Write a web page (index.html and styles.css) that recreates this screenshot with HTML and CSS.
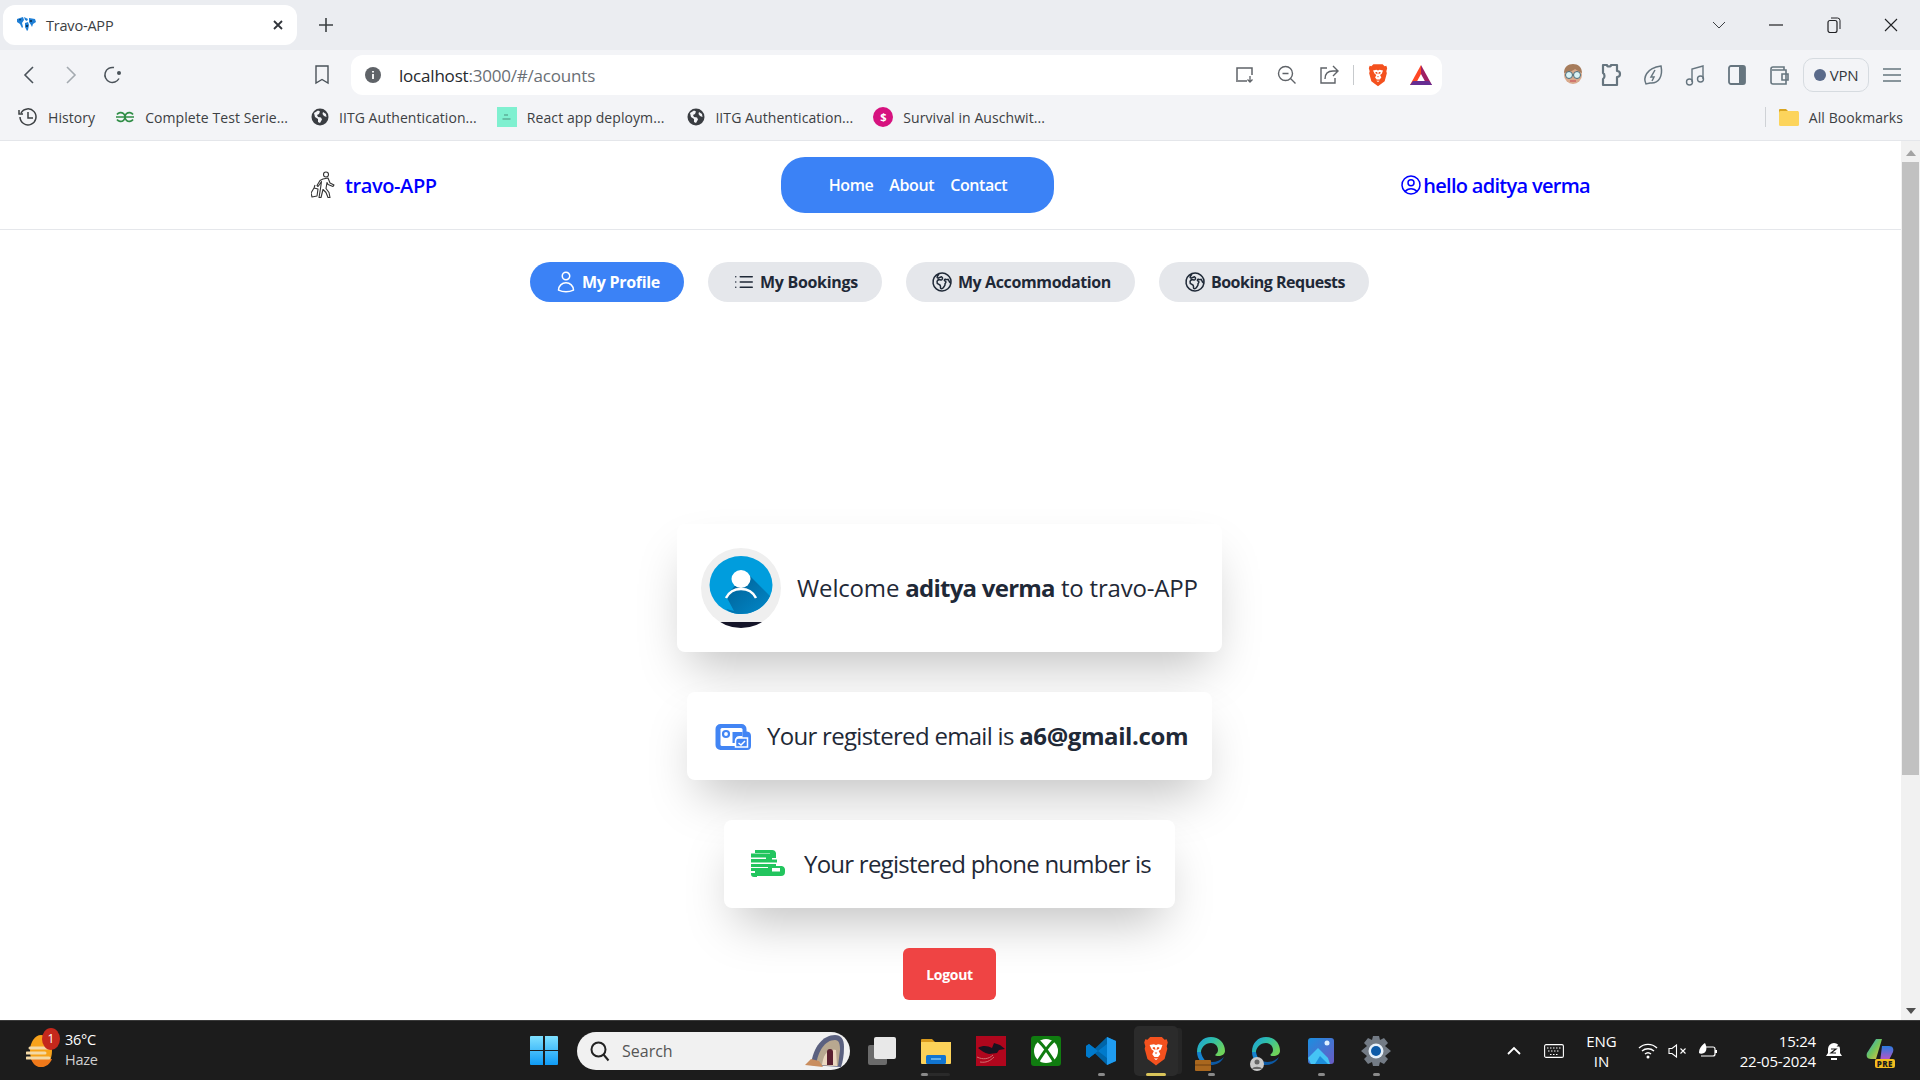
FILE: index.html
```html
<!doctype html>
<html lang="en">
<head>
<meta charset="utf-8">
<title>Travo-APP</title>
<link rel="stylesheet" href="styles.css">
</head>

<body>

<!-- shared logos -->
<svg class="defs" width="0" height="0">
  <defs>
    <linearGradient id="edge-g" x1="0" y1="0" x2="1" y2=".6"><stop offset="0" stop-color="#1b9de2"/><stop offset=".5" stop-color="#2fbfa8"/><stop offset="1" stop-color="#6fd35a"/></linearGradient>
  </defs>
  <symbol id="brave" viewBox="0 0 24 28">
    <path fill="#f4511e" d="M12 1h5.500L20 3.500l2-.5 1 3-1 3.500.6 2.500-2.600 9.500-6 4.500-2 1.500-2-1.500-6-4.500L1.400 12l.6-2.500L1 6l1-3 2 .5L6.500 1z"/>
    <path fill="#fff" d="M6 8.500l4-.8 2 .8 2-.8 4 .8-1.500 4-2 1.500 1.500 3-2 2.500H10.500l-2-2.500 1.500-3-2-1.500zM10 21h4l-2 1.500z"/>
    <path fill="#f4511e" d="M9 10.500h2l.5 2.500-2.500-1zM15 10.500h-2l-.5 2.500 2.500-1zM10.800 15.500h2.400l-1.200 1.500z"/>
  </symbol>
  <symbol id="globe" viewBox="0 0 24 24">
    <path fill="none" stroke="currentColor" stroke-width="1.500" stroke-linecap="round" stroke-linejoin="round" d="M20.893 13.393l-1.135-1.135a2.252 2.252 0 01-.421-.585l-1.08-2.16a.414.414 0 00-.663-.107.827.827 0 01-.812.21l-1.273-.363a.89.89 0 00-.738 1.595l.587.39c.59.395.674 1.23.172 1.732l-.2.2c-.212.212-.33.498-.33.796v.41c0 .409-.11.809-.32 1.158l-1.315 2.191a2.11 2.11 0 01-1.81 1.025 1.055 1.055 0 01-1.055-1.055v-1.172c0-.92-.56-1.747-1.414-2.089l-.655-.261a2.25 2.25 0 01-1.383-2.46l.007-.042a2.25 2.25 0 01.29-.787l.09-.15a2.25 2.25 0 012.37-1.048l1.178.236a1.125 1.125 0 001.302-.795l.208-.73a1.125 1.125 0 00-.578-1.315l-.665-.332-.091.091a2.25 2.25 0 01-1.591.659h-.18c-.249 0-.487.1-.662.274a.931.931 0 01-1.458-1.137l1.411-2.353a2.25 2.25 0 00.286-.76m11.928 9.869A9 9 0 008.965 3.525m11.928 9.868A9 9 0 118.965 3.525"/>
  </symbol>
  <symbol id="web" viewBox="0 0 18 18">
    <circle cx="9" cy="9" r="8.500" fill="#3a3d42"/>
    <path fill="#f3f4f7" d="M3 5l4-2.500 2 1-1 2.500-2 1 1 2 3 .5 1 2-2 3.500-2-1v-3L4 9zM12 4l3 2 .5 3-2.500-1-1.500-2z"/>
  </symbol>
  <symbol id="edge" viewBox="0 0 30 30">
    <path fill="url(#edge-g)" d="M1 16C1 7 7 1 15 1s14 6 14 14c0 3-3 5-7 5-3 0-3-1-2-2 1-1 2-2 2-4 0-4-3-7-7-7-6 0-10 5-10 9z"/>
    <path fill="#1583cf" d="M1 16c0 8 6 13 14 13-5-3-9-7-10-13z"/>
    <path fill="#0c59a4" d="M9 24c5 3 13 3 19-3-3 6-8 8-13 8-3 0-5-2-6-5z"/>
  </symbol>
</svg>

<!-- browser tab strip -->
<div class="tabstrip">
  <div class="tab">
    <svg class="fav" width="20" height="18" viewBox="0 0 20 18"><path fill="#1f7fd6" d="M1 3l6-2 1 3-2 3 1 4-1 1-2-4-3-2zM8 1l4 2-1 2-2-1zM9 7l3-1 1 3-1 5-1 1-2-4zM13 2l6 1 1 3-3 2-1 3-1-2-2-3z"/><path fill="#0b3b66" d="M3 3h2l-1 2zM14 4h2v2h-2zM10 9h2v2h-2z"/></svg>
    <span class="tab-title">Travo-APP</span>
    <svg class="tab-x" width="12" height="12" viewBox="0 0 12 12"><path d="M2 2l8 8M10 2l-8 8" stroke="#30343a" stroke-width="1.800"/></svg>
  </div>
  <svg class="tab-new" width="16" height="16" viewBox="0 0 16 16"><path d="M8 1v14M1 8h14" stroke="#3c4043" stroke-width="1.600"/></svg>
  <div class="winctl">
    <svg width="14" height="8" viewBox="0 0 14 8"><path d="M1 1l6 6 6-6" fill="none" stroke="#3c4043"/></svg>
    <svg width="14" height="2" viewBox="0 0 14 2"><path d="M0 1h14" stroke="#202124" stroke-width="1.200"/></svg>
    <svg width="14" height="16" viewBox="0 0 14 16"><rect x="1" y="3.500" width="9" height="12" rx="2" fill="none" stroke="#202124" stroke-width="1.200"/><path d="M4 1h6.500a2.500 2.500 0 012.500 2.500V12" fill="none" stroke="#202124"/></svg>
    <svg width="14" height="14" viewBox="0 0 14 14"><path d="M1 1l12 12M13 1L1 13" stroke="#202124" stroke-width="1.100"/></svg>
  </div>
</div>

<!-- address bar -->
<div class="toolbar">
  <div class="nav-btns">
    <svg width="12" height="20" viewBox="0 0 12 20"><path d="M10 2l-8 8 8 8" fill="none" stroke="#4a5259" stroke-width="1.600"/></svg>
    <svg width="12" height="20" viewBox="0 0 12 20"><path d="M2 2l8 8-8 8" fill="none" stroke="#a4aab0" stroke-width="1.600"/></svg>
    <svg class="reload" width="20" height="20" viewBox="0 0 20 20"><path d="M16 13.500A7.500 7.500 0 1111 2.600" fill="none" stroke="#4a5259" stroke-width="1.500"/><circle cx="16" cy="8" r="2" fill="#4a5259"/></svg>
  </div>
  <svg class="bm-btn" width="14" height="20" viewBox="0 0 14 20"><path d="M1 1h12v17l-6-3.500L1 18z" fill="none" stroke="#4a5259" stroke-width="1.400"/></svg>
  <div class="urlbar">
    <svg width="16" height="16" viewBox="0 0 16 16"><circle cx="8" cy="8" r="8" fill="#5f6368"/><path d="M8 4v1.500M8 7v5" stroke="#fff" stroke-width="1.800"/></svg>
    <span class="url"><b>localhost</b>:3000/#/acounts</span>
    <div class="url-icons">
      <svg width="20" height="18" viewBox="0 0 20 18"><path d="M2 14V2h15v7M1 15h11" fill="none" stroke="#5f6368" stroke-width="1.500"/><path d="M15 10v6m-2.500-2.500L15 16l2.500-2.500" fill="none" stroke="#5f6368" stroke-width="1.300"/></svg>
      <svg width="20" height="20" viewBox="0 0 20 20"><circle cx="8.500" cy="8.500" r="7" fill="none" stroke="#5f6368" stroke-width="1.400"/><path d="M5.500 8.500h6M13.500 13.500l5 5" stroke="#5f6368" stroke-width="1.400"/></svg>
      <svg width="20" height="20" viewBox="0 0 20 20"><path d="M8 3H2v15h14v-5" fill="none" stroke="#5f6368" stroke-width="1.400"/><path d="M6 14c0-5 3-8 8-8h4m-4-5l5 5-5 5" fill="none" stroke="#5f6368" stroke-width="1.400"/></svg>
      <i class="url-sep"></i>
      <svg class="brave-ic" width="20" height="24"><use href="#brave"/></svg>
      <svg width="22" height="20" viewBox="0 0 22 20"><path fill="#ff4724" d="M11 0L0 20h5l6-11z"/><path fill="#9e1f63" d="M11 0l11 20h-5L11 9z"/><path fill="#662d91" d="M0 20h22l-3-4H3z"/></svg>
    </div>
  </div>
  <div class="ext-icons">
    <svg class="ext-avatar" width="20" height="24" viewBox="0 0 20 24"><circle cx="10" cy="12" r="9" fill="#d9a98c"/><path d="M1 10c0-6 4-9 9-9s9 3 9 9c-3-1-5-3-7-4-2 2-7 3-11 4z" fill="#a67c5c"/><circle cx="6" cy="12" r="3.500" fill="#d8f2f5" stroke="#4a6a78"/><circle cx="14" cy="12" r="3.500" fill="#d8f2f5" stroke="#4a6a78"/><path d="M7 18h6" stroke="#c66" stroke-width="1.500"/></svg>
    <svg width="22" height="24" viewBox="0 0 22 24"><path d="M3 2h4c0 2 4 2 4 0h6v6c2 0 3 1 3 3s-1 3-3 3v8H3v-6c2-1 2-5 0-6z" fill="none" stroke="#66757f" stroke-width="2.200" stroke-linejoin="round"/></svg>
    <svg width="22" height="24" viewBox="0 0 20 24"><path d="M3 21c-3-6 0-16 15-18 2 10-2 18-11 17zM12 7l-4 7h3l-2 4" fill="none" stroke="#66757f" stroke-width="1.500"/></svg>
    <svg width="22" height="24" viewBox="0 0 20 24"><path d="M7 19V6l11-3v13" fill="none" stroke="#66757f" stroke-width="1.400"/><circle cx="4.500" cy="19" r="3" fill="none" stroke="#66757f" stroke-width="1.400"/><circle cx="15.500" cy="16" r="3" fill="none" stroke="#66757f" stroke-width="1.400"/></svg>
    <svg width="22" height="22" viewBox="-2 0 22 22"><rect x="1" y="2" width="16" height="18" rx="2" fill="none" stroke="#66757f" stroke-width="1.800"/><path fill="#66757f" d="M11 2h6v18h-6z"/></svg>
    <svg width="22" height="22" viewBox="-1 0 22 22"><path d="M2 5a2 2 0 012-2h11v3M2 5v13a2 2 0 002 2h13V6H3M13 10h6v6h-6z" fill="none" stroke="#66757f" stroke-width="1.600"/></svg>
    <div class="vpn"><i></i>VPN</div>
    <svg class="burger" width="18" height="14" viewBox="0 0 18 14"><path d="M0 1h18M0 7h18M0 13h18" stroke="#66757f" stroke-width="1.400"/></svg>
  </div>
</div>

<!-- bookmarks -->
<div class="bookmarks">
  <a class="bm"><svg width="20" height="20" viewBox="0 0 20 20"><path d="M3 6A8 8 0 112 10M1 3v4h4M10 5v6h5" fill="none" stroke="#3c4043" stroke-width="1.500"/></svg>History</a>
  <a class="bm"><svg width="20" height="12" viewBox="0 0 20 12"><path d="M2 3.500A4.400 4.400 0 112 8.500M1 6h18M18 3.500A4.400 4.400 0 1018 8.500" fill="none" stroke="#2f8d46" stroke-width="1.700"/></svg>Complete Test Serie...</a>
  <a class="bm bm-web"><svg width="18" height="18"><use href="#web"/></svg>IITG Authentication...</a>
  <a class="bm"><svg width="20" height="20" viewBox="0 0 20 20"><rect width="20" height="20" fill="#7ff0d0"/><path d="M7 8h4M5.500 12h8" stroke="#4c8f7d"/></svg>React app deploym...</a>
  <a class="bm bm-web"><svg width="18" height="18"><use href="#web"/></svg>IITG Authentication...</a>
  <a class="bm"><span class="bm-pink">$</span>Survival in Auschwit...</a>
  <a class="bm bm-all"><svg width="20" height="18" viewBox="0 0 20 18"><path fill="#d9a520" d="M0 2a1 1 0 011-1h6l2 2h10v3H0z"/><rect y="3" width="20" height="15" rx="1.500" fill="#fcd45c"/></svg>All Bookmarks</a>
</div>

<!-- page + scrollbar -->
<div class="viewport">
  <div class="page">
    <header class="topbar">
      <div class="logo">
        <svg width="24" height="28" viewBox="0 0 24 28"><g fill="none" stroke="#333" stroke-width="1.100" stroke-linejoin="round"><circle cx="15" cy="3.500" r="2.500"/><path d="M12 8l5-1 2 5 4 2-1 1.500-5-2-1-2-1 6 3 4 1 5h-2l-2-5-3-3-2 8H8l1.500-9 1-7-2 3-1.500 2-1-1 3-5z"/><path d="M3 17l4 1-1 7-5 1-1-4zM3 17l1-3"/></g></svg>
        <span>travo-APP</span>
      </div>
      <nav class="navpill">
        <a>Home</a>
        <a>About</a>
        <a>Contact</a>
      </nav>
      <div class="hello">
        <svg width="24" height="24" viewBox="0 0 24 24"><path fill="none" stroke="#00f" stroke-width="1.500" stroke-linecap="round" stroke-linejoin="round" d="M17.982 18.725A7.488 7.488 0 0012 15.750a7.488 7.488 0 00-5.982 2.975m11.963 0a9 9 0 10-11.963 0m11.963 0A8.966 8.966 0 0112 21a8.966 8.966 0 01-5.982-2.275M15 9.750a3 3 0 11-6 0 3 3 0 016 0z"/></svg>
        <span>hello aditya verma</span>
      </div>
    </header>

    <div class="tabs">
      <a class="pill active"><svg width="24" height="24" viewBox="0 0 24 24"><path fill="none" stroke="currentColor" stroke-width="1.500" stroke-linecap="round" stroke-linejoin="round" d="M15.750 6a3.750 3.750 0 11-7.500 0 3.750 3.750 0 017.500 0zM4.501 20.118a7.500 7.500 0 0114.998 0A17.933 17.933 0 0112 21.750c-2.676 0-5.216-.584-7.499-1.632z"/></svg>My Profile</a>
      <a class="pill"><svg width="24" height="24" viewBox="0 0 24 24"><path fill="none" stroke="currentColor" stroke-width="1.500" stroke-linecap="round" stroke-linejoin="round" d="M8.250 6.750h12M8.250 12h12m-12 5.250h12M3.750 6.750h.01M3.750 12h.01M3.750 17.250h.01"/></svg>My Bookings</a>
      <a class="pill"><svg width="24" height="24"><use href="#globe"/></svg>My Accommodation</a>
      <a class="pill"><svg width="24" height="24"><use href="#globe"/></svg>Booking Requests</a>
    </div>

    <section class="profile">
      <div class="card card-welcome">
        <div class="avatar">
          <svg width="80" height="80" viewBox="0 0 80 80">
            <defs>
              <linearGradient id="av-sh" x1="0" y1="0" x2="1" y2="1"><stop offset="0" stop-color="#005f94"/><stop offset="1" stop-color="#0288c9"/></linearGradient>
            </defs>
            <rect width="80" height="80" fill="#efefef"/>
            <rect y="74" width="80" height="6" fill="#141428"/>
            <ellipse cx="40" cy="37" rx="31.500" ry="29" fill="#009ddd"/>
            <path d="M25 48l14-16 10-4 20 20c-5 11-16 18-29 18-6 0-12-2-15-5l8 2z" fill="url(#av-sh)"/>
            <ellipse cx="40" cy="31" rx="9.500" ry="9" fill="#fff"/>
            <path d="M25 50c3-6 9-9 15-9s12 3 15 9" fill="none" stroke="#fff" stroke-width="2.500"/>
          </svg>
        </div>
        <p>Welcome <b>aditya verma</b> to travo-APP</p>
      </div>
      <div class="card card-email">
        <svg width="40" height="40" viewBox="-1.500 -1 40 40"><path fill="#4285f4" d="M8 7h21a5 5 0 015 5v2.500h.5a4.500 4.500 0 014 4.500v10a4 4 0 01-4 4H8a5 5 0 01-5-5V12a5 5 0 015-5z"/><rect x="8" y="11" width="22" height="18" rx="1.500" fill="#fff"/><circle cx="13.500" cy="17" r="3" fill="none" stroke="#4285f4" stroke-width="2.200"/><path d="M20 22v-7h10v4h-3a4 4 0 00-4 4v3h-3z" fill="#4285f4"/><path d="M23 30v-6a3 3 0 013-3h9v9z" fill="#4285f4" stroke="#fff" stroke-width="1.500"/><path d="M26 26l2.500 2 4-4" fill="none" stroke="#fff" stroke-width="1.500"/></svg>
        <p>Your registered email is <b>a6@gmail.com</b></p>
      </div>
      <div class="card card-phone">
        <svg width="40" height="40" viewBox="0 0 40 40"><path fill="#22c55e" d="M7 6h17a4 4 0 014 3v5h-4v1.500h5v3H3V15h15v-1.500H3V9.500h19V9H7zM3 20h25v2h6a4 4 0 013 3v3a4 4 0 01-4 4H9v1H6a3 3 0 01-3-3v-1h4v-2H3v-3h17v-1H3z"/><rect x="24" y="24" width="8" height="3.500" fill="#fff"/></svg>
        <p>Your registered phone number is</p>
      </div>
      <button class="logout">Logout</button>
    </section>
  </div>

  <div class="scrollbar">
    <i class="arrow-up"></i>
    <div class="thumb"></div>
    <i class="arrow-down"></i>
  </div>
</div>

<!-- windows taskbar -->
<div class="taskbar">
  <div class="weather">
    <div class="weather-ic">
      <svg width="28" height="34" viewBox="0 0 28 34"><ellipse cx="15" cy="17" rx="11" ry="16" fill="#f7a21b"/><path fill="#f0791a" d="M5 25h21c-2 5-6 8-11 8s-8-3-10-8z"/><path d="M4 14h20M1 19h18M1 24h22" stroke="#f4d9a6" stroke-width="3" stroke-linecap="round"/></svg>
      <span class="badge">1</span>
    </div>
    <div class="weather-txt"><span>36°C</span><span class="haze">Haze</span></div>
  </div>

  <div class="apps">
    <svg class="win" width="28" height="29" viewBox="0 0 28 29"><defs><linearGradient id="win-g" x1="0" y1="0" x2="0" y2="1"><stop offset="0" stop-color="#7ee0ff"/><stop offset="1" stop-color="#0f9bf5"/></linearGradient></defs><path fill="url(#win-g)" d="M0 1a1 1 0 011-1h12v14H0zM15 0h12a1 1 0 011 1v13H15zM0 15h13v14H1a1 1 0 01-1-1zM15 15h13v13a1 1 0 01-1 1H15z"/></svg>
    <div class="search">
      <svg width="22" height="22" viewBox="0 0 22 22"><circle cx="9.500" cy="9.500" r="7" fill="none" stroke="#222" stroke-width="2"/><path d="M14.500 14.500l5 6" stroke="#222" stroke-width="2"/></svg>
      <span>Search</span>
      <svg class="search-art" width="40" height="36" viewBox="0 0 40 36"><path d="M6 32C8 14 18 2 30 2c6 0 9 4 9 12 0 8-1 14-3 20z" fill="#5b6180"/><path d="M11 32C13 18 20 7 30 7c4 0 5 4 5 10l-2 16z" fill="#b8a890"/><path d="M17 32c1-10 6-17 14-15l1 16z" fill="#ecd8c0"/><path d="M22 32V19a3 3 0 016 0v13z" fill="#5a2030"/><path d="M0 32l6-6 8 2 4 6z" fill="#c98d5e"/></svg>
    </div>
    <svg class="taskview" width="28" height="28" viewBox="0 0 28 28"><rect y="8" width="19" height="20" rx="2" fill="#6b6b6b"/><rect x="6" width="22" height="22" rx="2" fill="#e8e8e8"/></svg>

    <div class="app run-wide">
      <svg width="30" height="28" viewBox="0 0 30 28"><path fill="#d99a1c" d="M0 3a1 1 0 011-1h10l3 3h-14z"/><path fill="#fcd259" d="M0 5h30v21a1 1 0 01-1 1H1a1 1 0 01-1-1z"/><rect x="5" y="18" width="20" height="9" rx="1.500" fill="#1175d1"/><path d="M10 22h10" stroke="#7cc4f5" stroke-width="1.500"/></svg>
    </div>
    <div class="app nodot"><svg width="30" height="30" viewBox="0 0 30 30"><rect width="30" height="30" fill="#b0061d"/><path fill="#1a1320" d="M2 12c5-3 10-2 14 0l2-5 6 2 5 4-6 1-2 3-8 1C8 17 5 14 2 12z"/><path d="M1 21c6 3 12 2 16-2M4 26c6 1 10-1 14-5" fill="none" stroke="#d07070"/></svg></div>
    <div class="app nodot"><svg width="30" height="30" viewBox="0 0 30 30"><rect width="30" height="30" rx="3" fill="#107c10"/><circle cx="15" cy="15" r="12" fill="#fff"/><path d="M6 4c5 3 13 15 18 23M24 4C19 7 11 19 6 27" fill="none" stroke="#107c10" stroke-width="3"/></svg></div>
    <div class="app"><svg width="30" height="30" viewBox="0 0 30 30"><path fill="#0065a9" d="M21 1l9 4v20l-9 4-12-11.500L3 22l-3-2v-10l3-2 6 4.500z"/><path fill="#007acc" d="M3 8l18 14V8L3 22l-3-2v-10z"/><path fill="#1f9cf0" d="M21 1l9 4v20l-9 4z"/></svg></div>
    <div class="app active">
      <svg width="26" height="30"><use href="#brave"/></svg>
    </div>
    <div class="app">
      <svg width="30" height="30"><use href="#edge"/></svg>
      <svg class="edge-tag" width="16" height="11" viewBox="0 0 16 11"><rect width="16" height="11" rx="1" fill="#a9671e"/><path d="M0 5h16" stroke="#6e4010"/></svg>
    </div>
    <div class="app nodot">
      <svg width="30" height="30"><use href="#edge"/></svg>
      <svg class="edge-tag edge-user" width="14" height="14" viewBox="0 0 14 14"><circle cx="7" cy="7" r="7" fill="#c9c9c9"/><circle cx="7" cy="5" r="2.500" fill="#666"/><path d="M2 12c1-3 9-3 10 0z" fill="#666"/></svg>
    </div>
    <div class="app">
      <svg width="26" height="26" viewBox="0 0 26 26"><defs><linearGradient id="ph-g" x1="0" y1="0" x2="1" y2="1"><stop offset="0" stop-color="#1b8fe0"/><stop offset="1" stop-color="#6a5bc4"/></linearGradient></defs><rect width="26" height="26" rx="3" fill="url(#ph-g)"/><circle cx="19" cy="5" r="2.500" fill="#dff0ff"/><path fill="#45c4f5" d="M0 20l10-10 10 10 2 6H3z"/><path fill="#1d8fdc" d="M7 26l5-8 8 8z"/></svg>
    </div>
    <div class="app">
      <svg width="30" height="30" viewBox="0 0 30 30"><path fill="#737b85" d="M12 0h6l1 4 4-2 4 5-3 3 6 5-6 5 3 3-4 5-4-2-1 4h-6l-1-4-4 2-4-5 3-3-6-5 6-5-3-3 4-5 4 2z"/><circle cx="15" cy="15" r="7.500" fill="#e6f0fa"/><circle cx="15" cy="15" r="5" fill="#0d5aa7"/></svg>
    </div>
  </div>

  <div class="tray">
    <svg class="tray-up" width="14" height="9" viewBox="0 0 14 9"><path d="M1 8l6-6 6 6" fill="none" stroke="#fff" stroke-width="1.800"/></svg>
    <svg class="tray-kb" width="20" height="14" viewBox="0 0 20 14"><rect x=".6" y=".6" width="18.800" height="12.800" rx="1.500" fill="none" stroke="#fff" stroke-width="1.100"/><path d="M3 4h14M4 7h12M6 10.500h8" stroke="#fff" stroke-dasharray="1.500 1.500"/></svg>
    <div class="lang"><span>ENG</span><span>IN</span></div>
    <svg width="20" height="16" viewBox="0 0 20 16"><path d="M1 5a13 13 0 0118 0M4 8a9 9 0 0112 0M7 11a4.500 4.500 0 016 0" fill="none" stroke="#fff" stroke-width="1.400"/><circle cx="10" cy="14" r="1.500" fill="#fff"/></svg>
    <svg width="20" height="14" viewBox="0 0 20 14"><path d="M1 4.500h3L8.500 1v12L4 9.500H1z" fill="none" stroke="#fff" stroke-width="1.100"/><path d="M12.500 4.500l5 5M17.500 4.500l-5 5" stroke="#fff" stroke-width="1.100"/></svg>
    <svg width="20" height="18" viewBox="0 0 20 18"><path d="M7 5h8a2 2 0 012 2v5a2 2 0 01-2 2H3" fill="none" stroke="#fff" stroke-width="1.200"/><path d="M17 8h2v3h-2" fill="#fff"/><path d="M1 11c0-5 3-8 6-10 2 4 2 8-1 10-2 1-4 1-5 0z" fill="#fff"/></svg>
    <div class="clock"><span>15:24</span><span>22-05-2024</span></div>
    <svg width="18" height="20" viewBox="0 0 18 20"><path fill="#fff" d="M8 2a6 6 0 016 6v4l2 3H0l2-3V8a6 6 0 016-6z"/><path d="M5 17h6v2H5z" fill="#fff"/><path d="M5 8h5l-5 4h5M12 1h4l-4 4h4" fill="none" stroke="#1c1c1c" stroke-width="1.200"/></svg>
    <div class="copilot">
      <svg width="28" height="26" viewBox="0 0 28 26"><defs><linearGradient id="cp-g" x1="0" y1="0" x2="1" y2="1"><stop offset="0" stop-color="#27a6e8"/><stop offset=".5" stop-color="#71c45c"/><stop offset="1" stop-color="#f2c53d"/></linearGradient><linearGradient id="cp-h" x1="0" y1="0" x2="0" y2="1"><stop offset="0" stop-color="#2a7be0"/><stop offset="1" stop-color="#d04ec0"/></linearGradient></defs><path fill="url(#cp-g)" d="M10 1h6l-6 20H5C1 21 0 18 1 15z"/><path fill="url(#cp-h)" d="M16 8h7c4 0 5 3 4 6l-3 6c-1 3-3 4-6 4h-4z"/></svg>
      <span class="pre">PRE</span>
    </div>
  </div>
</div>

</body>
</html>
```

FILE: styles.css
```css
* {
  box-sizing: border-box;
  margin: 0;
  padding: 0;
}
html, body {
  height: 100%;
  overflow: hidden;
}
body {
  font-family: "Open Sans", sans-serif;
  display: flex;
  flex-direction: column;
  background: #fff;
}
.defs {
  position: absolute;
}
svg {
  flex: none;
  display: block;
}

/* ── tab strip ─────────────────────────────────────────────────── */
.tabstrip {
  height: 50px;
  background: #ebedf1;
  display: flex;
  align-items: center;
  padding: 0 0 0 3px;
}
.tab {
  width: 294px;
  height: 40px;
  background: #fff;
  border-radius: 12px;
  display: flex;
  align-items: center;
  padding: 0 13px 0 13px;
}
.tab-title {
  margin-left: 10px;
  font-size: 14.500px;
  letter-spacing: -.2px;
  color: #3c4043;
}
.tab-x {
  margin-left: auto;
}
.tab-new {
  margin-left: 21px;
}
.winctl {
  margin-left: auto;
  width: 208px;
  padding-right: 22px;
  display: flex;
  justify-content: space-between;
  align-items: center;
}

/* ── toolbar ───────────────────────────────────────────────────── */
.toolbar {
  height: 50px;
  background: #f3f4f7;
  display: flex;
  align-items: center;
  padding-left: 23px;
}
.nav-btns {
  display: flex;
  align-items: center;
  gap: 30px;
  width: 292px;
}
.reload {
  margin-left: -4px;
}
.bm-btn {
  margin-right: 22px;
}
.urlbar {
  width: 1091px;
  height: 40px;
  background: #fff;
  border-radius: 12px;
  display: flex;
  align-items: center;
  padding: 0 10px 0 14px;
}
.url {
  margin-left: 18px;
  font-size: 17px;
  letter-spacing: -.2px;
  color: #6a6f75;
}
.url b {
  font-weight: 400;
  color: #26292d;
}
.url-icons {
  margin-left: auto;
  display: flex;
  align-items: center;
  gap: 22px;
}
.url-sep {
  width: 1px;
  height: 20px;
  background: #c7cacd;
  margin: 0 -8px;
}
.ext-icons {
  flex: 1;
  display: flex;
  align-items: center;
  justify-content: flex-end;
  gap: 20px;
  padding-right: 19px;
}
.ext-avatar {
  margin-right: -3px;
}
.vpn {
  width: 66px;
  height: 34px;
  margin: 0 -6px 0 -7px;
  border: 1px solid #d6dbe0;
  border-radius: 10px;
  display: flex;
  align-items: center;
  justify-content: center;
  gap: 4px;
  font-size: 15px;
  letter-spacing: -.3px;
  color: #33383d;
}
.vpn i {
  width: 12px;
  height: 12px;
  border-radius: 50%;
  background: #5a6a8a;
}

/* ── bookmarks ─────────────────────────────────────────────────── */
.bookmarks {
  height: 41px;
  background: #f3f4f7;
  border-bottom: 1px solid #e4e6ea;
  display: flex;
  align-items: center;
  padding: 0 17px 6px 18px;
  gap: 20px;
  font-size: 14px;
  letter-spacing: .07px;
  color: #3c4043;
}
.bm {
  display: flex;
  align-items: center;
  gap: 10px;
  white-space: nowrap;
}
.bm-web {
  margin-left: 3px;
}
.bm-pink {
  width: 20px;
  height: 20px;
  border-radius: 50%;
  background: #d6127f;
  color: #fff;
  font-size: 11px;
  font-weight: 700;
  text-align: center;
  line-height: 20px;
}
.bm-all {
  margin-left: auto;
  padding-left: 13px;
  border-left: 1px solid #cfd2d6;
  height: 20px;
}

/* ── page ──────────────────────────────────────────────────────── */
.viewport {
  flex: 1;
  min-height: 0;
  display: flex;
}
.page {
  flex: 1;
  min-width: 0;
  color: #1f2937;
}
.topbar {
  height: 89px;
  border-bottom: 1px solid #e5e7eb;
  display: flex;
  align-items: center;
  justify-content: space-between;
  padding: 0 311px;
}
.logo, .hello {
  display: flex;
  align-items: center;
  color: #00f;
  font-size: 20px;
  font-weight: 600;
  letter-spacing: -.4px;
}
.hello {
  letter-spacing: -.7px;
}
.logo {
  gap: 10px;
}
.navpill {
  width: 273px;
  height: 56px;
  border-radius: 24px;
  background: #3b82f6;
  color: #fff;
  font-size: 16px;
  font-weight: 600;
  letter-spacing: -.4px;
  display: flex;
  align-items: center;
  justify-content: center;
  gap: 16px;
}
.tabs {
  display: flex;
  justify-content: center;
  gap: 24px;
  margin: 32px 2px 0 0;
}
.pill {
  height: 40px;
  border-radius: 20px;
  padding: 0 24px;
  background: #e5e7eb;
  color: #1f2937;
  font-size: 16px;
  font-weight: 700;
  letter-spacing: -.3px;
  display: flex;
  align-items: center;
  gap: 4px;
}
.pill:nth-child(3) {
  letter-spacing: -.38px;
}
.pill:last-child {
  letter-spacing: -.5px;
}
.pill.active {
  background: #3b82f6;
  color: #fff;
}

/* ── profile cards ─────────────────────────────────────────────── */
.profile {
  display: flex;
  flex-direction: column;
  align-items: center;
  gap: 40px;
  margin: 222px 2px 0 0;
}
.card {
  padding: 24px;
  background: #fff;
  border-radius: 8px;
  box-shadow: 0 25px 50px -12px rgba(0,0,0,.25);
  display: flex;
  align-items: center;
  gap: 16px;
  font-size: 24px;
  line-height: 40px;
  white-space: nowrap;
  letter-spacing: -.7px;
}
.card b {
  font-weight: 700;
}
.card-welcome {
  letter-spacing: -.18px;
}
.card-welcome b {
  letter-spacing: -.75px;
}
.card-email b {
  letter-spacing: -.4px;
}
.card-phone {
  letter-spacing: -.75px;
}
.avatar {
  width: 80px;
  height: 80px;
  border-radius: 50%;
  overflow: hidden;
}
.logout {
  width: 93px;
  height: 52px;
  border: 0;
  border-radius: 6px;
  background: #ef4444;
  color: #fff;
  font-family: inherit;
  font-size: 14px;
  font-weight: 700;
  letter-spacing: -.3px;
}

/* ── scrollbar ─────────────────────────────────────────────────── */
.scrollbar {
  width: 19px;
  background: #f1f1f1;
  display: flex;
  flex-direction: column;
  align-items: center;
}
.arrow-up, .arrow-down {
  width: 0;
  height: 0;
  border-left: 5px solid transparent;
  border-right: 5px solid transparent;
}
.arrow-up {
  border-bottom: 6px solid #a3a3a3;
  margin-top: 9px;
}
.arrow-down {
  border-top: 6px solid #505050;
  margin-top: auto;
  margin-bottom: 6px;
}
.thumb {
  width: 17px;
  height: 613px;
  margin-top: 6px;
  background: #c1c1c1;
}

/* ── taskbar ───────────────────────────────────────────────────── */
.taskbar {
  height: 60px;
  background: #1c1c1c;
  border-top: 1px solid #3a3a3a;
  display: flex;
  align-items: center;
  color: #fff;
  font-size: 14px;
}
.weather {
  width: 530px;
  display: flex;
  align-items: center;
  padding-left: 26px;
  gap: 11px;
}
.weather-ic {
  position: relative;
}
.badge {
  position: absolute;
  top: -6px;
  right: -6px;
  width: 18px;
  height: 22px;
  border-radius: 50%;
  background: #c4281c;
  font-size: 12px;
  line-height: 22px;
  text-align: center;
}
.weather-txt {
  display: flex;
  flex-direction: column;
  font-size: 14.500px;
  line-height: 20px;
  letter-spacing: -.3px;
  margin-top: -2px;
}
.haze {
  color: #d0d0d0;
}
.apps {
  display: flex;
  align-items: center;
}
.search {
  width: 273px;
  height: 38px;
  margin-left: 19px;
  border-radius: 19px;
  background: #f1f1f1;
  color: #555;
  font-size: 16px;
  display: flex;
  align-items: center;
  padding: 0 5px 0 12px;
  gap: 11px;
}
.search-art {
  margin-left: auto;
}
.taskview {
  margin: 0 12px 0 18px;
}
.app {
  width: 55px;
  height: 50px;
  display: flex;
  align-items: center;
  justify-content: center;
  position: relative;
}
.app::after {
  content: "";
  position: absolute;
  bottom: 0;
  left: 50%;
  margin-left: -3px;
  width: 7px;
  height: 3px;
  border-radius: 2px;
  background: #8a8a8a;
}
.app.nodot::after {
  display: none;
}
.run-wide::before {
  content: "";
  position: absolute;
  bottom: 0;
  left: 12px;
  width: 30px;
  height: 3px;
  border-radius: 2px;
  background: #2a2a2a;
}
.run-wide::after {
  margin-left: -15px;
}
.app.active {
  width: 44px;
  margin: 0 5.500px;
  background: #2b2b2b;
  border-radius: 5px;
  box-shadow: 6px 0 0 -2px #262626;
}
.app.active::after {
  width: 20px;
  margin-left: -10px;
  background: #d9c45a;
}
.edge-tag {
  position: absolute;
  left: 12px;
  bottom: 5px;
}
.tray {
  margin-left: auto;
  display: flex;
  align-items: center;
  gap: 10px;
  padding-right: 26px;
  font-size: 15px;
}
.tray-up {
  margin-right: 13px;
}
.tray-kb {
  margin-right: 12px;
}
.lang {
  display: flex;
  flex-direction: column;
  align-items: center;
  line-height: 20px;
  margin-right: 11px;
}
.clock {
  display: flex;
  flex-direction: column;
  align-items: flex-end;
  line-height: 20px;
  margin-left: 12px;
  letter-spacing: -.2px;
}
.copilot {
  position: relative;
  margin-left: 12px;
}
.pre {
  position: absolute;
  right: -1px;
  bottom: -4px;
  padding: 0 2px;
  border-radius: 2px;
  background: #f5bd1f;
  color: #1c1c1c;
  font-size: 8px;
  line-height: 9px;
  font-weight: 800;
  letter-spacing: .5px;
}
```
